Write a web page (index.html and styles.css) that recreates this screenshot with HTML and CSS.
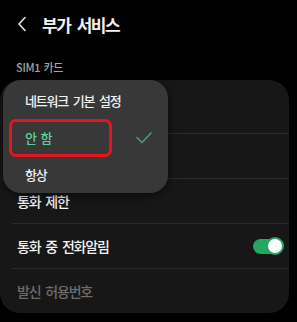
FILE: index.html
```html
<!DOCTYPE html>
<html>
<head>
    <title>부가 서비스</title>
    <link rel="stylesheet" href="styles.css">
</head>
<body>

    <div class="header">
        <svg class="back" width="10" height="16" viewBox="0 0 10 16">
            <path d="M8 1.5 L2 8 L8 14.5" fill="none" stroke="#e8e8e8" stroke-width="1.6" stroke-linecap="round" stroke-linejoin="round"/>
        </svg>
        <span class="title">부가 서비스</span>
    </div>

    <div class="section-label">SIM1 카드</div>

    <div class="content">
        <div class="card">
            <div class="row"></div>
            <div class="row"></div>
            <div class="row">통화 제한</div>
            <div class="row">
                <span>통화 중 전화알림</span>
                <label class="switch">
                    <input type="checkbox" checked>
                    <span class="slider"></span>
                </label>
            </div>
            <div class="row disabled">발신 허용번호</div>
        </div>

        <div class="popup">
            <div class="popup-item">네트워크 기본 설정</div>
            <div class="popup-item selected">
                <span>안 함</span>
                <svg width="16" height="12" viewBox="0 0 16 12">
                    <path d="M1 5.5 L6 10.5 L15 1" fill="none" stroke="#4b9c7a" stroke-width="1.6" stroke-linecap="round" stroke-linejoin="round"/>
                </svg>
            </div>
            <div class="popup-item">항상</div>
        </div>

        <div class="highlight"></div>
    </div>

</body>
</html>
```

FILE: styles.css
```css
body {
    margin: 0;
    padding: 0;
    background-color: #000;
    color: #f2f2f2;
    font-family: "Noto Sans CJK KR", "Noto Sans", sans-serif;
    width: 297px;
    height: 322px;
    overflow: hidden;
}

.header {
    height: 48px;
    display: flex;
    align-items: center;
    padding-left: 17px;
}

.back {
    margin-right: 15px;
}

.title {
    font-size: 17px;
    font-weight: 700;
    letter-spacing: -1.5px;
    word-spacing: 4px;
}

.section-label {
    padding: 13px 0 0 16px;
    height: 19px;
    font-size: 11px;
    line-height: 13px;
    font-weight: 500;
    color: #a3a3a3;
    letter-spacing: -0.3px;
    word-spacing: 1px;
}

.content {
    position: relative;
}

.card {
    background-color: #171717;
    border-radius: 20px;
    margin-right: 8px;
    padding-top: 9px;
}

.row {
    height: 44px;
    margin-left: 12px;
    padding-left: 5px;
    padding-right: 6px;
    border-bottom: 1px solid #2b2b2b;
    display: flex;
    align-items: center;
    justify-content: space-between;
    font-size: 14px;
    font-weight: 500;
    letter-spacing: -1.2px;
    word-spacing: 3px;
}

.row:last-child {
    border-bottom: none;
}

.row.disabled {
    color: #6c6c6c;
}

.switch {
    position: relative;
    display: inline-block;
    width: 30px;
    height: 15px;
}

.switch input {
    opacity: 0;
    width: 0;
    height: 0;
}

.slider {
    position: absolute;
    top: 0;
    left: 0;
    right: 0;
    bottom: 0;
    background-color: #555;
    border-radius: 8px;
}

.slider:before {
    position: absolute;
    content: "";
    width: 14px;
    height: 14px;
    left: -1px;
    top: -1.5px;
    background-color: #fff;
    border: 2px solid #22a862;
    border-radius: 50%;
}

input:checked + .slider {
    background-color: #22a862;
}

input:checked + .slider:before {
    transform: translateX(14px);
}

.popup {
    position: absolute;
    top: 0;
    left: 3px;
    width: 165px;
    padding-top: 2px;
    height: 111px;
    background-color: #383838;
    border-radius: 18px;
    box-shadow: 0 2px 10px rgba(0, 0, 0, 0.6);
}

.popup-item {
    height: 37px;
    padding: 0 16px 0 22px;
    display: flex;
    align-items: center;
    justify-content: space-between;
    font-size: 13px;
    font-weight: 500;
    letter-spacing: -1.2px;
    word-spacing: 3px;
}

.popup-item.selected {
    color: #5fd09a;
}

.highlight {
    position: absolute;
    top: 39px;
    left: 9px;
    width: 97px;
    height: 32px;
    border: 3px solid #e5141d;
    border-radius: 7px;
}
```
